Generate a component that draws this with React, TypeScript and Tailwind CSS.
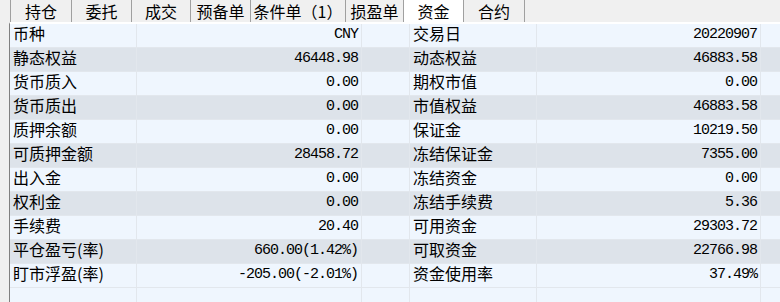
import React from "react";

const tabs = [
  { name: "持仓", w: "w-[61px]" },
  { name: "委托", w: "w-[60px]" },
  { name: "成交", w: "w-[59px]" },
  { name: "预备单", w: "w-[60px]" },
  { name: "条件单（1）", w: "w-[95px]" },
  { name: "损盈单", w: "w-[58px]" },
  { name: "资金", w: "w-[60px]", active: true },
  { name: "合约", w: "w-[62px]" },
];

const rows: [string, string, string, string][] = [
  ["币种", "CNY", "交易日", "20220907"],
  ["静态权益", "46448.98", "动态权益", "46883.58"],
  ["货币质入", "0.00", "期权市值", "0.00"],
  ["货币质出", "0.00", "市值权益", "46883.58"],
  ["质押余额", "0.00", "保证金", "10219.50"],
  ["可质押金额", "28458.72", "冻结保证金", "7355.00"],
  ["出入金", "0.00", "冻结资金", "0.00"],
  ["权利金", "0.00", "冻结手续费", "5.36"],
  ["手续费", "20.40", "可用资金", "29303.72"],
  ["平仓盈亏(率)", "660.00(1.42%)", "可取资金", "22766.98"],
  ["盯市浮盈(率)", "-205.00(-2.01%)", "资金使用率", "37.49%"],
];

const cjk = "font-['Noto_Sans_CJK_SC',sans-serif] text-[16px] leading-[16px]";
const mono = "font-['Liberation_Mono',monospace] text-[15px] leading-[16px] tracking-[-1px]";

function Row({ cells, gray }: { cells?: [string, string, string, string]; gray: boolean }) {
  const bg = gray ? "bg-[#dde3ea]" : "bg-[#eff6fe]";
  const cell = "h-full border-r border-[#e2e7ed]";
  return (
    <div className={`flex h-6 border-b border-[#e2e7ed] ${bg}`}>
      <div className={`${cell} w-[127px] pl-[3px] pt-[1px] ${cjk}`}>{cells?.[0]}</div>
      <div className={`${cell} w-[225px] pr-[3px] pt-[3px] text-right ${mono}`}>{cells?.[1]}</div>
      <div className={`${cell} w-[48px]`} />
      <div className={`${cell} w-[127px] pl-[3px] pt-[1px] ${cjk}`}>{cells?.[2]}</div>
      <div className={`${cell} w-[224px] pr-[3px] pt-[3px] text-right ${mono}`}>{cells?.[3]}</div>
      <div className="h-full flex-1" />
    </div>
  );
}

export default function App() {
  return (
    <div className="w-[780px] h-[302px] overflow-hidden bg-[#f0f0f0] text-black">
      <div className="flex h-[22px] pl-[10px]">
        {tabs.map((t, i) => (
          <div
            key={t.name}
            className={`flex items-center justify-center ${t.w} ${
              t.active ? "bg-white" : "bg-[#f0f0f0]"
            } border-l border-[#a0a0a0] ${i === tabs.length - 1 ? "border-r" : ""} ${cjk}`}
          >
            {t.name}
          </div>
        ))}
      </div>
      <div className="ml-[9px] border-l border-[#808080] border-t-2 border-t-white">
        {rows.map((r, i) => (
          <Row key={r[0]} cells={r} gray={i % 2 === 1} />
        ))}
        <Row gray={false} />
      </div>
    </div>
  );
}
